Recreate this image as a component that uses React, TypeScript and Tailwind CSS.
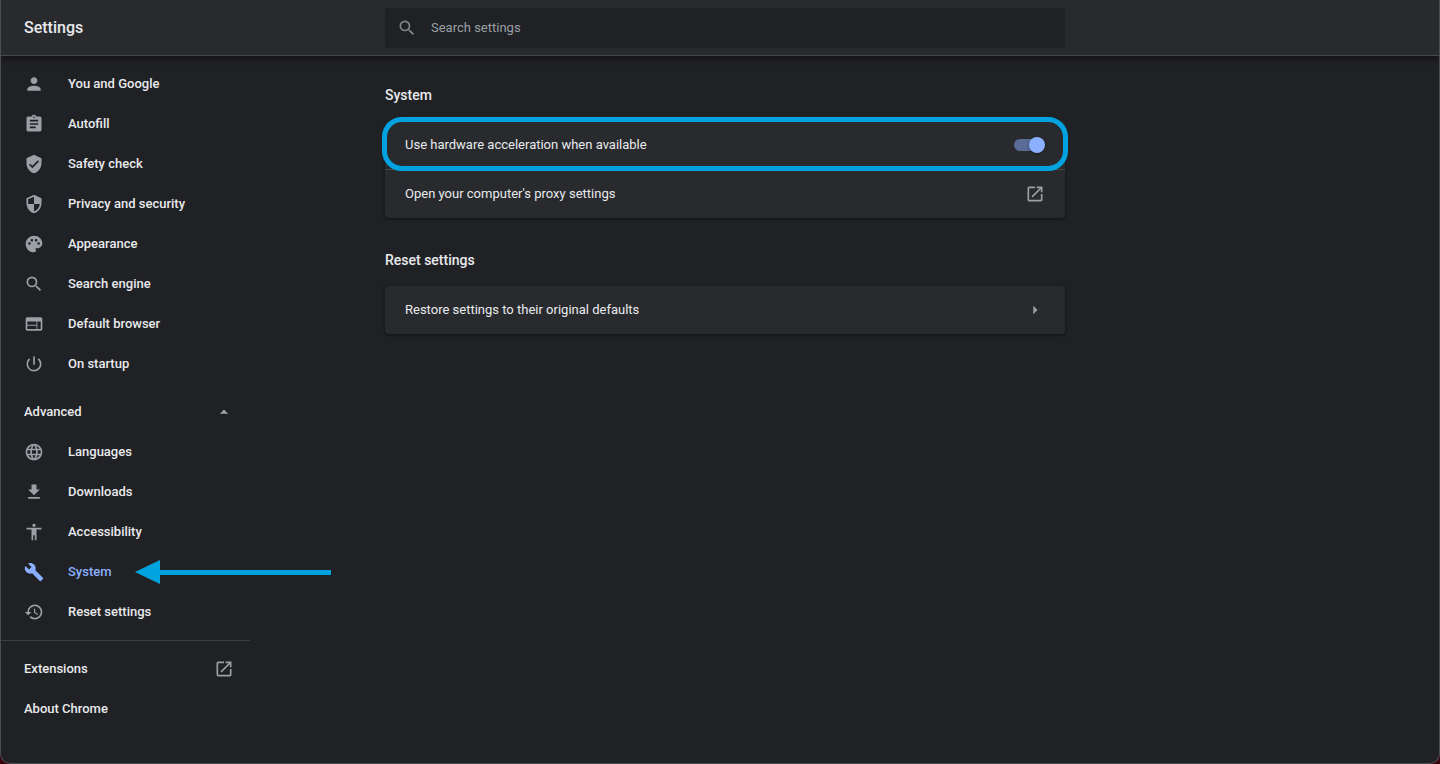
import type { IconType } from "react-icons";
import {
  MdAccessibility,
  MdArrowDropUp,
  MdArrowRight,
  MdAssignment,
  MdBuild,
  MdFileDownload,
  MdLanguage,
  MdOpenInNew,
  MdPalette,
  MdPerson,
  MdPowerSettingsNew,
  MdRestore,
  MdSearch,
  MdSecurity,
  MdVerifiedUser,
  MdWeb,
} from "react-icons/md";

type MenuItem = {
  title: string;
  icon: IconType;
  active?: boolean;
};

const basicItems: MenuItem[] = [
  { title: "You and Google", icon: MdPerson },
  { title: "Autofill", icon: MdAssignment },
  { title: "Safety check", icon: MdVerifiedUser },
  { title: "Privacy and security", icon: MdSecurity },
  { title: "Appearance", icon: MdPalette },
  { title: "Search engine", icon: MdSearch },
  { title: "Default browser", icon: MdWeb },
  { title: "On startup", icon: MdPowerSettingsNew },
];

const advancedItems: MenuItem[] = [
  { title: "Languages", icon: MdLanguage },
  { title: "Downloads", icon: MdFileDownload },
  { title: "Accessibility", icon: MdAccessibility },
  { title: "System", icon: MdBuild, active: true },
  { title: "Reset settings", icon: MdRestore },
];

const MenuLink = ({ item }: { item: MenuItem }) => {
  const Icon = item.icon;

  return (
    <li className="relative">
      <a
        href="#"
        className={`flex h-10 items-center gap-6 pl-[23px] ${
          item.active ? "text-[#8ab0ff]" : ""
        }`}
      >
        <Icon
          className={`size-5 ${
            item.active ? "text-[#8ab0ff]" : "text-[#9aa0a6]"
          }`}
        />
        {item.title}
      </a>
      {item.active && (
        <svg
          className="absolute top-2 left-[134px] h-6 w-[196px] text-[#00a3e0]"
          viewBox="0 0 196 24"
          fill="currentColor"
          aria-hidden="true"
        >
          <path d="M0 12 25 0V10H196V15H25V24Z" />
        </svg>
      )}
    </li>
  );
};

const Header = () => {
  return (
    <header className="relative grid h-14 grid-cols-[max(266px,calc(50%-335px))_minmax(0,680px)_1fr] items-center border-b border-[#46474a] bg-[#292a2d] shadow-[0_2px_6px_rgba(0,0,0,0.5)]">
      <h1 className="pl-[23px] text-base font-medium">Settings</h1>
      <label className="flex h-10 items-center gap-[14px] rounded-xs bg-[#202124] px-3">
        <MdSearch className="size-5 text-[#80868b]" />
        <input
          type="search"
          placeholder="Search settings"
          aria-label="Search settings"
          className="min-w-0 flex-1 bg-transparent outline-none placeholder:text-[#9aa0a6]"
        />
      </label>
    </header>
  );
};

const Sidebar = () => {
  return (
    <nav className="w-[249px] pt-2 font-medium">
      <ul>
        {basicItems.map((item) => (
          <MenuLink key={item.title} item={item} />
        ))}
      </ul>

      {/* Advanced */}
      <button
        type="button"
        aria-expanded="true"
        className="mt-2 flex h-10 w-full items-center justify-between pr-4 pl-[23px]"
      >
        Advanced
        <MdArrowDropUp className="size-5 text-[#9aa0a6]" />
      </button>
      <ul>
        {advancedItems.map((item) => (
          <MenuLink key={item.title} item={item} />
        ))}
      </ul>

      <div className="mt-2 border-t border-[#3c3d40]">
        <a
          href="#"
          className="mt-2 flex h-10 items-center justify-between pr-4 pl-[23px]"
        >
          Extensions
          <MdOpenInNew className="size-5 text-[#9aa0a6]" />
        </a>
        <a href="#" className="flex h-10 items-center pl-[23px]">
          About Chrome
        </a>
      </div>
    </nav>
  );
};

const App = () => {
  return (
    <div className="min-h-screen bg-[#3a0008]">
      <div className="flex min-h-screen flex-col overflow-hidden rounded-b-[10px] border border-t-0 border-[#4b4c4f] bg-[#202124] font-['Roboto',sans-serif] text-[13px] leading-5 text-[#e8eaed]">
        <Header />

        <div className="grid flex-1 grid-cols-[max(266px,calc(50%-335px))_minmax(0,680px)_1fr]">
          <Sidebar />

          <main className="pt-[29px]">
            {/* System */}
            <section>
              <h2 className="pb-4 text-sm leading-5 font-medium">System</h2>
              <div className="rounded bg-[#292a2d] shadow-[0_1px_3px_rgba(0,0,0,0.5)]">
                <label className="relative flex h-12 items-center justify-between px-5">
                  Use hardware acceleration when available
                  <input
                    type="checkbox"
                    role="switch"
                    defaultChecked
                    className="relative mr-[3px] h-3 w-7 appearance-none rounded-full bg-[#5a6b98] before:absolute before:-top-0.5 before:-right-[3px] before:size-4 before:rounded-full before:bg-[#8ab0ff] before:shadow-[0_1px_3px_rgba(0,0,0,0.4)]"
                  />
                  <span className="pointer-events-none absolute -inset-x-[3px] -top-1 -bottom-0.5 rounded-[20px] border-5 border-[#00a3e0]" />
                </label>
                <a
                  href="#"
                  className="flex h-[49px] items-center justify-between border-t border-[#46474a] px-5"
                >
                  Open your computer's proxy settings
                  <MdOpenInNew className="size-5 text-[#9aa0a6]" />
                </a>
              </div>
            </section>

            {/* Reset settings */}
            <section className="pt-8">
              <h2 className="pb-4 text-sm leading-5 font-medium">
                Reset settings
              </h2>
              <button
                type="button"
                className="flex h-12 w-full items-center justify-between rounded bg-[#292a2d] px-5 shadow-[0_1px_3px_rgba(0,0,0,0.5)]"
              >
                Restore settings to their original defaults
                <MdArrowRight className="size-5 text-[#9aa0a6]" />
              </button>
            </section>
          </main>
        </div>
      </div>
    </div>
  );
};

export default App;
